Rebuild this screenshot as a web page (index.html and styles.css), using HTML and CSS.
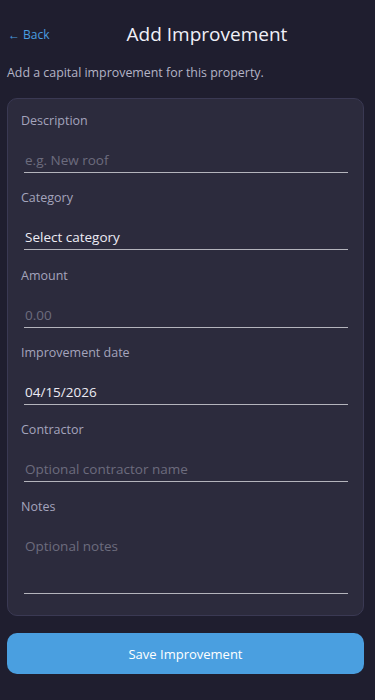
FILE: index.html
```html
<!DOCTYPE html>
<html lang="en">
<head>
<meta charset="utf-8">
<meta name="viewport" content="width=device-width, initial-scale=1">
<title>Add Improvement</title>
<link rel="stylesheet" href="styles.css">
</head>
<body>
<div class="page">
  <header class="header">
    <a class="back" href="#">← Back</a>
    <h1 class="title">Add Improvement</h1>
  </header>
  <p class="subtitle">Add a capital improvement for this property.</p>
  <form class="card">
    <div class="field">
      <label class="label">Description</label>
      <input class="input" type="text" placeholder="e.g. New roof">
    </div>
    <div class="field">
      <label class="label">Category</label>
      <div class="input select">Select category</div>
    </div>
    <div class="field">
      <label class="label">Amount</label>
      <input class="input" type="text" placeholder="0.00">
    </div>
    <div class="field">
      <label class="label">Improvement date</label>
      <input class="input" type="text" value="04/15/2026">
    </div>
    <div class="field">
      <label class="label">Contractor</label>
      <input class="input" type="text" placeholder="Optional contractor name">
    </div>
    <div class="field">
      <label class="label">Notes</label>
      <textarea class="input textarea" placeholder="Optional notes"></textarea>
    </div>
  </form>
  <button class="save" type="button">Save Improvement</button>
</div>
</body>
</html>
```
FILE: styles.css
```css
html, body {
  margin: 0;
  padding: 0;
  background: #1f1e2f;
}
body {
  font-family: "Open Sans", "Noto Sans", sans-serif;
  color: #e8e8f0;
}
.page {
  padding: 20px 11px 26px 7px;
}
.header {
  display: flex;
  align-items: center;
  height: 28px;
}
.back {
  color: #4a9fe0;
  font-size: 12px;
  text-decoration: none;
  padding-left: 1px;
  width: 42px;
}
.title {
  flex: 1;
  margin: 0;
  text-align: center;
  font-size: 19px;
  font-weight: 500;
  line-height: 28px;
  color: #f0f0f8;
}
.subtitle {
  margin: 16px 0 16px;
  font-size: 12.4px;
  line-height: 18px;
  color: #b4b4c6;
}
.card {
  background: #2c2b3d;
  border: 1px solid #3a3953;
  border-radius: 10px;
  padding: 13px 15px 21px 13px;
  display: flex;
  flex-direction: column;
  gap: 16.3px;
}
.field {
  display: flex;
  flex-direction: column;
}
.label {
  font-size: 12.5px;
  line-height: 18px;
  color: #a4a4bc;
  margin-bottom: 10px;
}
.input {
  margin-left: 3px;
  width: calc(100% - 3px);
  box-sizing: border-box;
  background: transparent;
  border: none;
  border-bottom: 1px solid #b4b4bc;
  padding: 10px 1px 2px;
  font-family: inherit;
  font-size: 13.5px;
  line-height: 20px;
  color: #ececf4;
  outline: none;
}
.input::placeholder {
  color: #6c6c7e;
}
.textarea {
  height: 68px;
  padding-top: 10px;
  resize: none;
  display: block;
}
.save {
  display: block;
  width: 100%;
  height: 41px;
  margin-top: 17px;
  border: none;
  border-radius: 10px;
  background: #4a9fe0;
  color: #ffffff;
  font-family: inherit;
  font-size: 13px;
  font-weight: 500;
}
```
